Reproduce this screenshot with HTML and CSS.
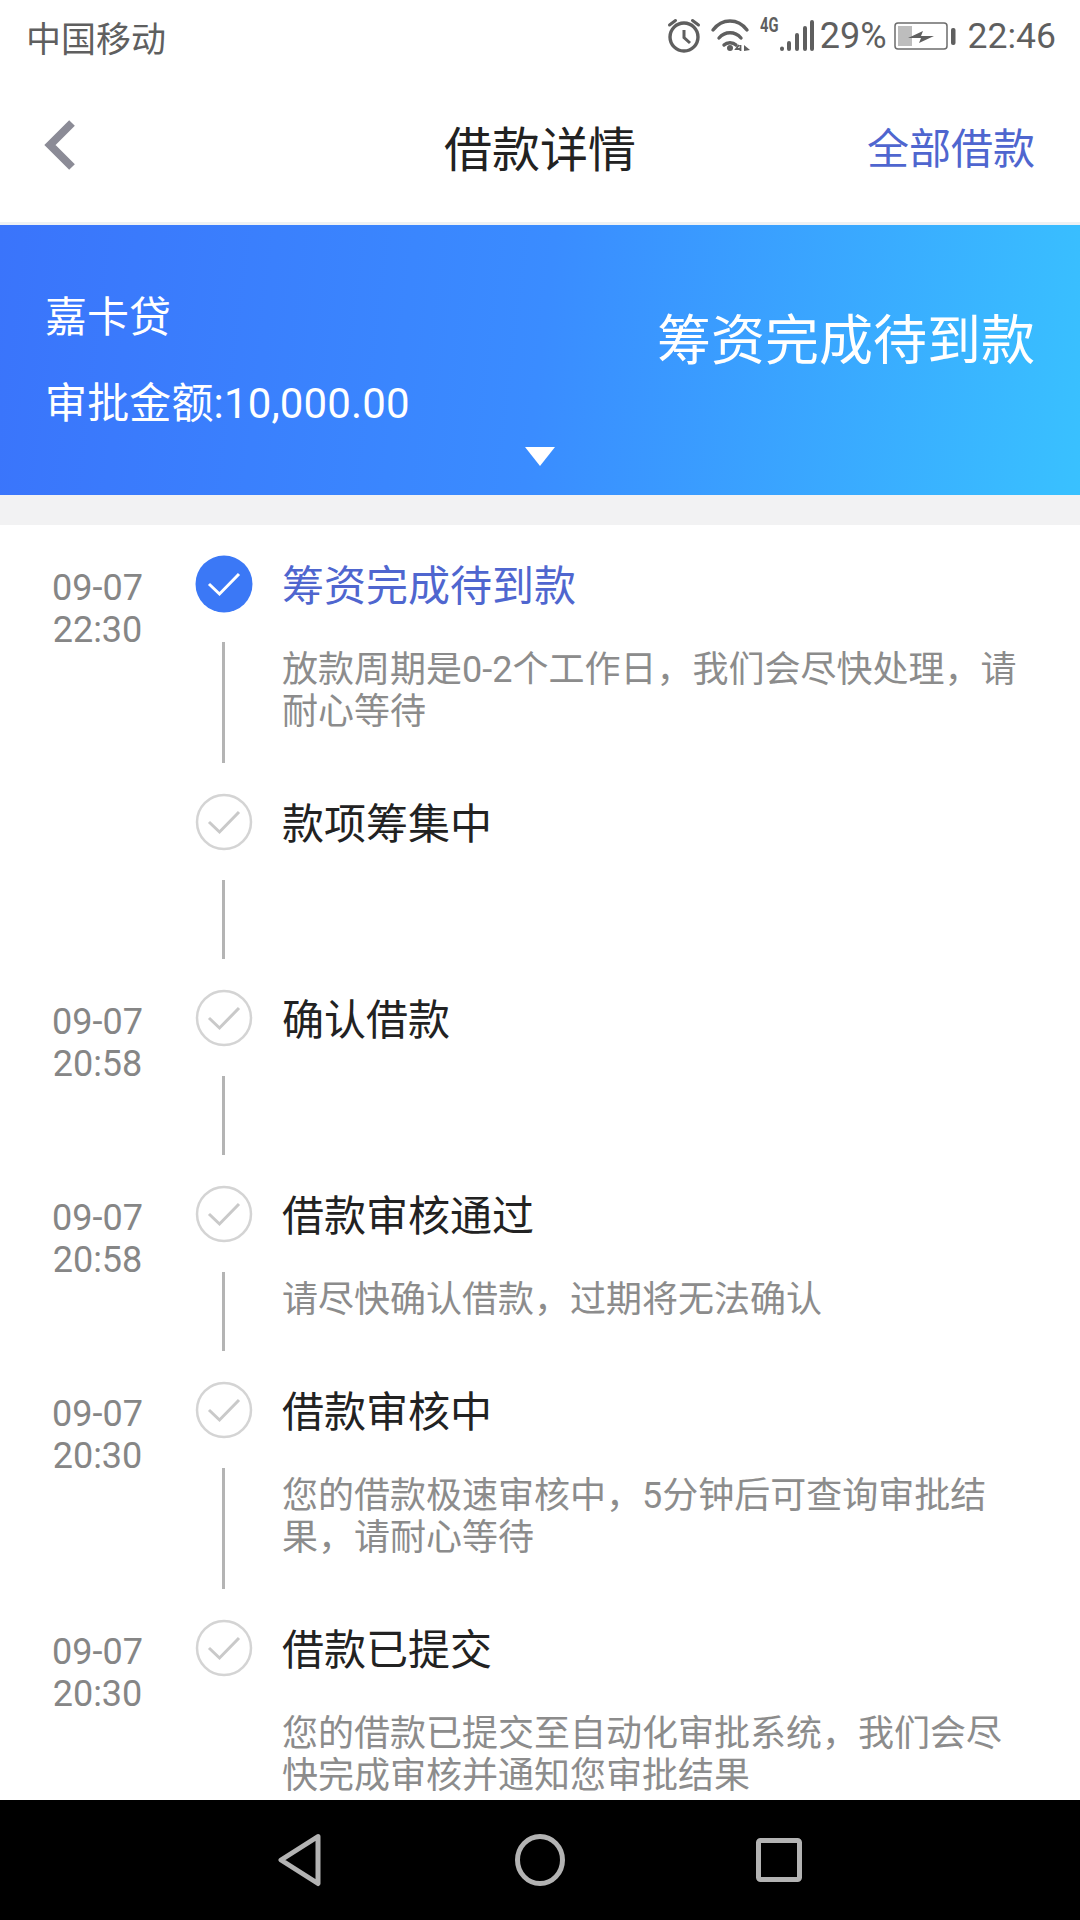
FILE: index.html
```html
<!DOCTYPE html>
<html lang="zh-CN">
<head>
<meta charset="utf-8">
<title>借款详情</title>
<link rel="stylesheet" href="styles.css">
</head>
<body>
<div class="screen">
  <div class="statusbar">
    <span class="carrier">中国移动</span>
    <div class="status-right">
      <svg class="ic-alarm" width="36" height="36" viewBox="0 0 36 36"><circle cx="17" cy="19" r="14" fill="none" stroke="#5f5f5f" stroke-width="3.400"/><path d="M17 12v7.500l6 5.500" fill="none" stroke="#5f5f5f" stroke-width="3"/><path d="M2.500 7l6-4.500M31.500 7l-6-4.500" fill="none" stroke="#5f5f5f" stroke-width="3" stroke-linecap="round"/></svg>
      <svg class="ic-wifi" width="42" height="36" viewBox="0 0 42 36"><path d="M3 12C12 0 28 0 37 12M9 20C15 13 25 13 31 20M14 27C17 24 23 24 26 27" fill="none" stroke="#5f5f5f" stroke-width="3.400" stroke-linecap="round"/><circle cx="20" cy="30" r="3" fill="#5f5f5f"/><path d="M29 27l-3 4h5M30.500 27v6" fill="none" stroke="#5f5f5f" stroke-width="1.800"/><path d="M34 27v6l6-1z" fill="#5f5f5f"/></svg>
      <span class="tag4g">4G</span>
      <svg class="ic-signal" width="36" height="36" viewBox="0 0 36 36"><g stroke="#5f5f5f" stroke-width="4" stroke-linecap="round"><path d="M2 30.500v.5M9 25v6M17 17v14M25 10v21M32 4v27"/></g></svg>
      <span class="pct">29%</span>
      <svg class="ic-batt" width="62" height="32" viewBox="0 0 62 32"><rect x="1" y="3" width="52" height="26" rx="3" fill="none" stroke="#6c6c6c" stroke-width="1.500"/><rect x="4" y="6" width="14" height="20" fill="#bdbdbd"/><path d="M14 18L29 11L27 16L40 16L25 23L27 18z" fill="#5f5f5f"/><rect x="57" y="8" width="4.500" height="17" rx="2" fill="#5f5f5f"/></svg>
      <span class="clock">22:46</span>
    </div>
  </div>

  <header class="navbar">
    <svg class="back" width="34" height="52" viewBox="0 0 34 52"><path d="M29 4L7 26l22 22" fill="none" stroke="#8b8b96" stroke-width="8"/></svg>
    <h1 class="nav-title">借款详情</h1>
    <a class="nav-link">全部借款</a>
  </header>

  <section class="banner">
    <div class="banner-main">
      <div class="banner-left">
        <div class="product">嘉卡贷</div>
        <div class="amount">审批金额:10,000.00</div>
      </div>
      <div class="banner-status">筹资完成待到款</div>
    </div>
    <div class="caret"></div>
  </section>

  <main class="timeline">
    <div class="item tall">
      <div class="time">09-07<br>22:30</div>
      <div class="rail">
        <svg class="dot" width="58" height="58" viewBox="0 0 58 58"><circle cx="29" cy="29" r="28.500" fill="#3b78f6"/><path d="M14 29l10.500 10L44 19" fill="none" stroke="#fff" stroke-width="3"/></svg>
        <div class="line"></div>
      </div>
      <div class="body">
        <div class="title active">筹资完成待到款</div>
        <div class="desc">放款周期是0-2个工作日，我们会尽快处理，请耐心等待</div>
      </div>
    </div>
    <div class="item">
      <div class="time"></div>
      <div class="rail">
        <svg class="dot" width="58" height="58" viewBox="0 0 58 58"><circle cx="29" cy="29" r="27" fill="none" stroke="#d4d4d4" stroke-width="2.500"/><path d="M14 29l10.500 10L44 19" fill="none" stroke="#c9c9c9" stroke-width="3"/></svg>
        <div class="line"></div>
      </div>
      <div class="body"><div class="title">款项筹集中</div></div>
    </div>
    <div class="item">
      <div class="time">09-07<br>20:58</div>
      <div class="rail">
        <svg class="dot" width="58" height="58" viewBox="0 0 58 58"><circle cx="29" cy="29" r="27" fill="none" stroke="#d4d4d4" stroke-width="2.500"/><path d="M14 29l10.500 10L44 19" fill="none" stroke="#c9c9c9" stroke-width="3"/></svg>
        <div class="line"></div>
      </div>
      <div class="body"><div class="title">确认借款</div></div>
    </div>
    <div class="item">
      <div class="time">09-07<br>20:58</div>
      <div class="rail">
        <svg class="dot" width="58" height="58" viewBox="0 0 58 58"><circle cx="29" cy="29" r="27" fill="none" stroke="#d4d4d4" stroke-width="2.500"/><path d="M14 29l10.500 10L44 19" fill="none" stroke="#c9c9c9" stroke-width="3"/></svg>
        <div class="line"></div>
      </div>
      <div class="body">
        <div class="title">借款审核通过</div>
        <div class="desc">请尽快确认借款，过期将无法确认</div>
      </div>
    </div>
    <div class="item tall">
      <div class="time">09-07<br>20:30</div>
      <div class="rail">
        <svg class="dot" width="58" height="58" viewBox="0 0 58 58"><circle cx="29" cy="29" r="27" fill="none" stroke="#d4d4d4" stroke-width="2.500"/><path d="M14 29l10.500 10L44 19" fill="none" stroke="#c9c9c9" stroke-width="3"/></svg>
        <div class="line"></div>
      </div>
      <div class="body">
        <div class="title">借款审核中</div>
        <div class="desc">您的借款极速审核中，5分钟后可查询审批结果，请耐心等待</div>
      </div>
    </div>
    <div class="item tall">
      <div class="time">09-07<br>20:30</div>
      <div class="rail">
        <svg class="dot" width="58" height="58" viewBox="0 0 58 58"><circle cx="29" cy="29" r="27" fill="none" stroke="#d4d4d4" stroke-width="2.500"/><path d="M14 29l10.500 10L44 19" fill="none" stroke="#c9c9c9" stroke-width="3"/></svg>
      </div>
      <div class="body">
        <div class="title">借款已提交</div>
        <div class="desc">您的借款已提交至自动化审批系统，我们会尽快完成审核并通知您审批结果</div>
      </div>
    </div>
  </main>

  <nav class="softkeys">
    <svg class="key" width="48" height="54" viewBox="0 0 48 54"><path d="M42 3.500L5 27l37 23.500z" fill="none" stroke="#b3b3b3" stroke-width="5" stroke-linejoin="round"/></svg>
    <svg class="key" width="50" height="52" viewBox="0 0 50 52"><ellipse cx="25" cy="26" rx="22.500" ry="23.500" fill="none" stroke="#b3b3b3" stroke-width="5"/></svg>
    <svg class="key" width="46" height="44" viewBox="0 0 46 44"><rect x="2.500" y="2.500" width="41" height="39" rx="2" fill="none" stroke="#b3b3b3" stroke-width="5"/></svg>
  </nav>
</div>
</body>
</html>
```
FILE: styles.css
```css
* { box-sizing: border-box; margin: 0; padding: 0; }
html, body { width: 1080px; height: 1920px; overflow: hidden; background: #fff; }
body { font-family: Roboto, "Noto Sans CJK SC", sans-serif; }
.screen { width: 1080px; height: 1920px; display: flex; flex-direction: column; }

.statusbar { height: 76px; flex: none; display: flex; align-items: center; justify-content: space-between; padding: 0 24px 4px 26px; color: #5f5f5f; }
.carrier { font-size: 35px; }
.status-right { display: flex; align-items: center; }
.ic-wifi { margin-left: 7px; }
.tag4g { width: 20px; margin-left: 8px; font-size: 21px; line-height: 16px; font-weight: 700; align-self: flex-start; margin-top: 2px; transform: scaleX(0.7); transform-origin: left top; white-space: nowrap; }
.pct { font-size: 36px; margin-left: 4px; }
.ic-batt { margin-left: 7px; }
.clock { font-size: 35.500px; margin-left: 12px; }

.navbar { height: 149px; flex: none; display: flex; align-items: center; position: relative; padding: 0 45px 7px 43px; border-bottom: 3px solid #eef1f4; }
.nav-title { font-size: 48px; font-weight: 400; color: #222; position: absolute; left: 0; right: 0; text-align: center; }
.nav-link { margin-left: auto; font-size: 42px; color: #4f66cf; position: relative; }
.back { margin-top: -1px; }

.banner { height: 270px; flex: none; background: linear-gradient(97deg, #3a74fb 0%, #3a8cff 50%, #39c1ff 100%); color: #fff; padding: 0 45px; display: flex; flex-direction: column; position: relative; }
.banner-main { display: flex; align-items: center; justify-content: space-between; height: 230px; }
.banner-left { display: flex; flex-direction: column; gap: 36px; margin-top: 42px; }
.product { font-size: 42px; line-height: 50px; }
.amount { font-size: 42px; line-height: 50px; letter-spacing: 0.150px; }
.banner-status { font-size: 54px; margin-bottom: 8px; }
.caret { width: 0; height: 0; border-left: 15px solid transparent; border-right: 15px solid transparent; border-top: 19px solid #fff; align-self: center; margin-top: -8px; }

.timeline { flex: 1; min-height: 0; overflow: hidden; margin-top: 30px; padding-top: 30px; background: #fff; box-shadow: 0 -30px 0 #f2f2f3; }

.item { display: grid; grid-template-columns: 195px 57px 1fr; height: 196px; }
.item.tall { height: 238px; }
.time { font-size: 36px; line-height: 42px; color: #868686; text-align: center; padding-top: 12px; }
.rail { display: flex; flex-direction: column; align-items: center; }
.dot { flex: none; }
.line { width: 3px; flex: 1; background: #b4b4b4; margin: 29px 0 30px; }
.body { padding: 3px 60px 0 30px; }
.title { font-size: 42px; line-height: 58px; color: #222; }
.title.active { color: #4f66cf; }
.desc { font-size: 36px; line-height: 42px; color: #8c8c8c; margin-top: 33px; }

.softkeys { height: 120px; flex: none; background: #000; display: flex; align-items: center; padding-left: 276px; }
.key + .key { margin-left: 191px; }
```
